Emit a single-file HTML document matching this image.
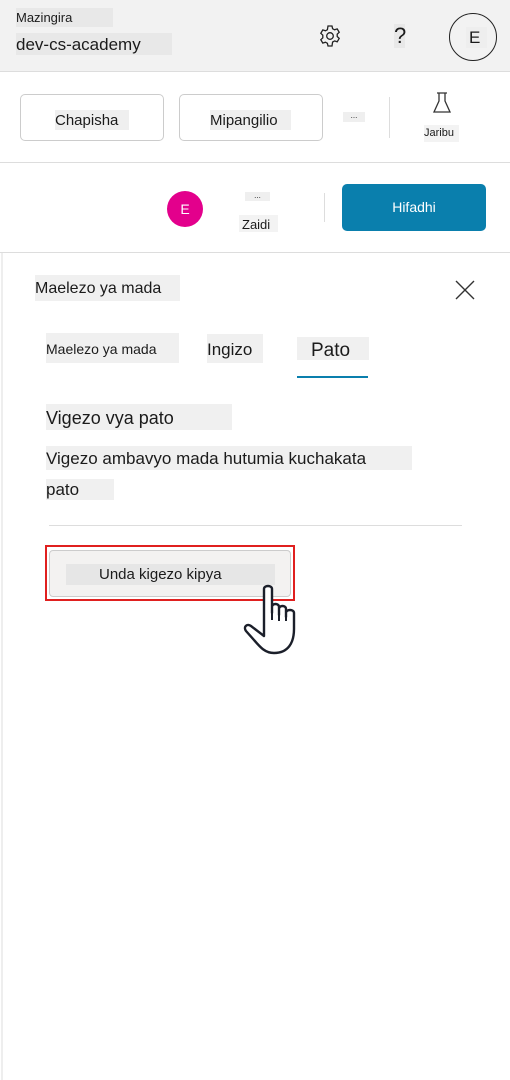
<!DOCTYPE html>
<html><head><meta charset="utf-8"><style>
*{margin:0;padding:0;box-sizing:border-box}
body{width:510px;height:1080px;background:#fff;font-family:"Liberation Sans","DejaVu Sans",sans-serif;color:#1b1b1b;position:relative;overflow:hidden}
.a{position:absolute}
.hl{background:#efefef;white-space:nowrap;line-height:1}
</style></head><body>
<div class="a" style="left:0;top:0;width:510px;height:72px;background:#f2f2f2;border-bottom:1px solid #ddd"></div>
<div class="a hl" style="left:16px;top:8px;width:97px;height:19px;font-size:13px;padding-top:3px;background:#e8e8e8">Mazingira</div>
<div class="a hl" style="left:16px;top:33px;width:156px;height:22px;font-size:17px;padding-top:3px;background:#e8e8e8">dev-cs-academy</div>
<svg class="a" style="left:318px;top:24px" width="24" height="24" viewBox="0 0 24 24" fill="none" stroke="#222" stroke-width="1.3"><path d="M10 2h4l.6 2.7 2 1.1 2.6-.9 2 3.4-2 1.9v2.3l2 1.9-2 3.4-2.6-.9-2 1.1L14 22h-4l-.6-2.7-2-1.1-2.6.9-2-3.4 2-1.9V11.2l-2-1.9 2-3.4 2.6.9 2-1.1z"/><circle cx="12" cy="12" r="3.3"/></svg>
<div class="a hl" style="left:394px;top:24px;width:11px;height:24px;font-size:22px;padding-top:1px;background:#e8e8e8">?</div>
<div class="a" style="left:449px;top:13px;width:48px;height:48px;border:1px solid #222;border-radius:50%"></div>
<div class="a hl" style="left:466px;top:27px;width:21px;height:21px;font-size:17px;padding:2px 0 0 3px;background:#eee">E</div>

<div class="a" style="left:20px;top:94px;width:144px;height:47px;border:1px solid #ccc;border-radius:5px"></div>
<div class="a hl" style="left:55px;top:110px;width:74px;height:20px;font-size:15px;padding-top:3px">Chapisha</div>
<div class="a" style="left:179px;top:94px;width:144px;height:47px;border:1px solid #ccc;border-radius:5px"></div>
<div class="a hl" style="left:210px;top:110px;width:81px;height:20px;font-size:15px;padding-top:3px">Mipangilio</div>
<div class="a hl" style="left:343px;top:112px;width:22px;height:10px;font-size:8px;text-align:center">...</div>
<div class="a" style="left:389px;top:97px;width:1px;height:41px;background:#ddd"></div>
<svg class="a" style="left:431px;top:91px" width="22" height="24" viewBox="0 0 22 24" fill="none" stroke="#333" stroke-width="1.3"><path d="M6 2h10M8 2v8L3 21h16L14 10V2"/></svg>
<div class="a hl" style="left:424px;top:125px;width:35px;height:17px;font-size:11px;padding-top:3px;background:#f3f3f3">Jaribu</div>
<div class="a" style="left:0;top:162px;width:510px;height:1px;background:#ddd"></div>

<div class="a" style="left:167px;top:191px;width:36px;height:36px;border-radius:50%;background:#e3008c;color:#fff;font-size:14px;text-align:center;line-height:36px">E</div>
<div class="a hl" style="left:245px;top:192px;width:25px;height:9px;font-size:8px;text-align:center">...</div>
<div class="a hl" style="left:239px;top:215px;width:39px;height:17px;font-size:13px;padding:3px 0 0 3px;background:#f3f3f3">Zaidi</div>
<div class="a" style="left:324px;top:193px;width:1px;height:29px;background:#ddd"></div>
<div class="a" style="left:342px;top:184px;width:144px;height:47px;background:#0a7fad;border-radius:5px;color:#fff;font-size:14px;text-align:center;line-height:47px">Hifadhi</div>
<div class="a" style="left:0;top:252px;width:510px;height:1px;background:#ddd"></div>
<div class="a" style="left:1px;top:253px;width:2px;height:827px;background:#eee"></div>

<div class="a hl" style="left:35px;top:275px;width:145px;height:26px;font-size:16px;padding-top:6px;background:#f0f0f0">Maelezo ya mada</div>
<svg class="a" style="left:455px;top:280px" width="20" height="20" viewBox="0 0 20 20" stroke="#333" stroke-width="1.4"><path d="M1 1L19 19M19 1L1 19"/></svg>
<div class="a hl" style="left:46px;top:333px;width:133px;height:30px;font-size:14px;padding-top:9px;background:#f0f0f0">Maelezo ya mada</div>
<div class="a hl" style="left:207px;top:334px;width:56px;height:29px;font-size:17px;padding-top:7px;background:#f0f0f0">Ingizo</div>
<div class="a hl" style="left:297px;top:337px;width:72px;height:23px;font-size:19px;padding:4px 0 0 14px;background:#f0f0f0">Pato</div>
<div class="a" style="left:297px;top:376px;width:71px;height:2px;background:#0a7fad"></div>
<div class="a hl" style="left:46px;top:404px;width:186px;height:26px;font-size:18px;padding-top:5px;background:#f0f0f0">Vigezo vya pato</div>
<div class="a hl" style="left:46px;top:446px;width:366px;height:24px;font-size:17px;padding-top:4px;background:#f0f0f0">Vigezo ambavyo mada hutumia kuchakata</div>
<div class="a hl" style="left:46px;top:479px;width:68px;height:21px;font-size:17px;padding-top:2px;background:#f0f0f0">pato</div>
<div class="a" style="left:49px;top:525px;width:413px;height:1px;background:#ddd"></div>
<div class="a" style="left:45px;top:545px;width:250px;height:56px;border:2px solid #e0201f"></div>
<div class="a" style="left:49px;top:550px;width:242px;height:47px;background:#f3f2f1;border:1px solid #ccc;border-radius:4px"></div>
<div class="a hl" style="left:66px;top:564px;width:209px;height:21px;font-size:15px;padding:3px 0 0 33px;background:#e6e6e6">Unda kigezo kipya</div>
<svg class="a" style="left:240px;top:580px" width="66" height="76" viewBox="0 0 66 76" fill="#fff" stroke="#1b1f2a" stroke-width="2.4" stroke-linejoin="round"><path d="M24 9c0-4 8-4 8 0v24V27c0-4 7-4 7 0v8-6c0-4 7-4 7 0v8-4c0-4 8-4 8 0v16c0 14-6 24-20 24-9 0-14-6-20-13l-8-9c-3-4 1-8 5-5l13 10z"/><path d="M32 30v10M39 33v8M46 35v6" fill="none" stroke-width="2"/></svg>
</body></html>
